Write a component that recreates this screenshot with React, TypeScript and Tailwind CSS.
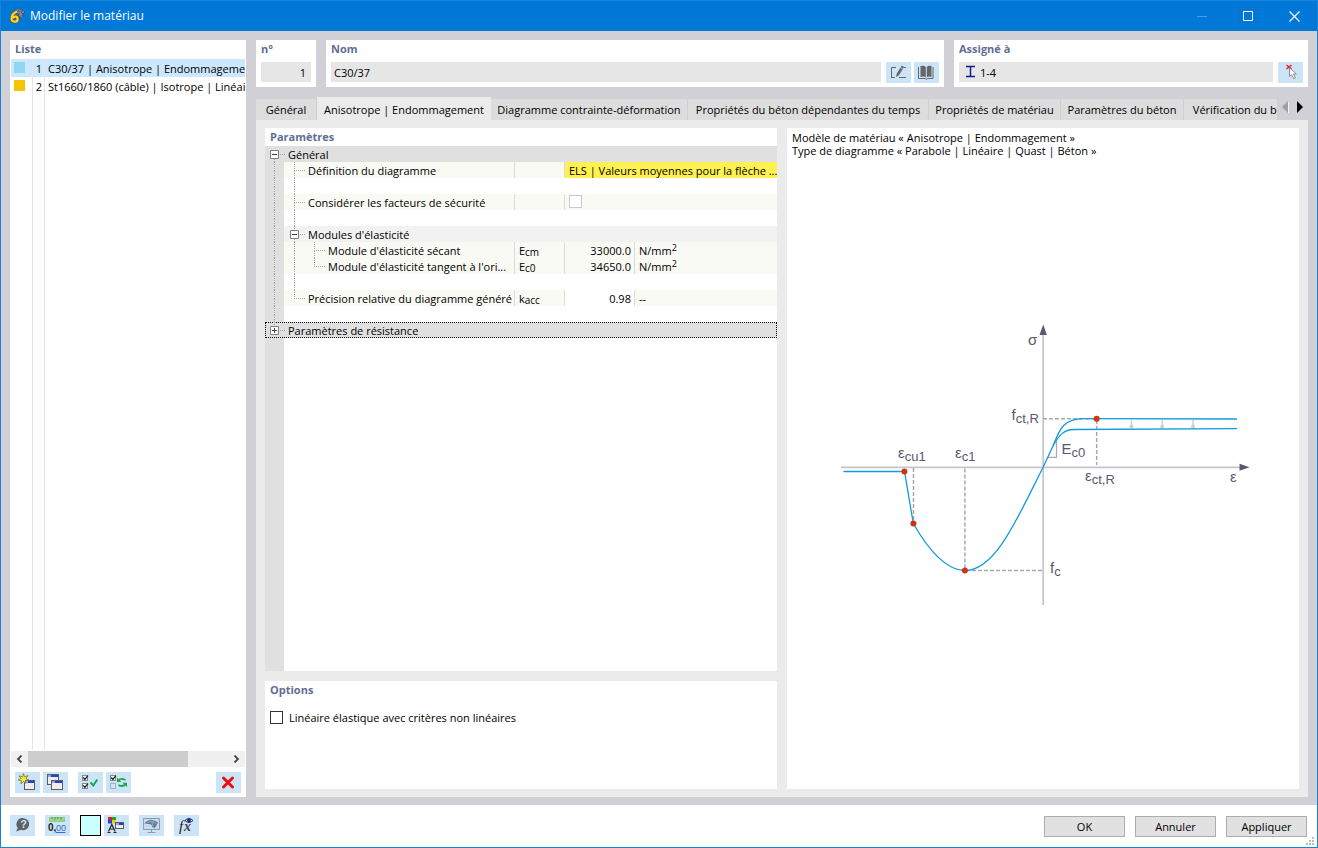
import React, { useState } from "react";

const iconButton =
  "flex h-[21px] w-[25px] shrink-0 items-center justify-center bg-[#cce4f7] hover:bg-[#b5d9f5]";
const heading = "h-[18px] px-[5px] font-bold leading-[18px] text-[#5f6d93]";
const field = "h-5 min-w-0 bg-[#e6e6e6] outline-none";

type IconProps = { children: React.ReactNode };

function Icon({ children }: IconProps) {
  return (
    <svg width="25" height="21" viewBox="0 0 25 21" aria-hidden="true">
      {children}
    </svg>
  );
}

function IconButton({ label, children }: { label: string; children: React.ReactNode }) {
  return (
    <button type="button" aria-label={label} className={iconButton}>
      <Icon>{children}</Icon>
    </button>
  );
}

function MiniWindow({ x, y, w = 11, h = 10 }: { x: number; y: number; w?: number; h?: number }) {
  return (
    <g>
      <rect x={x + 0.5} y={y + 0.5} width={w - 1} height={h - 1} fill="#eeedeb" stroke="#5c5c5c" />
      <rect x={x + 1} y={y + 1} width={w - 2} height="2" fill="#1f3fe0" />
      <rect x={x + 1} y={y + 1} width="3" height="2" fill="#8fa6ee" />
    </g>
  );
}

function TickedBox({ x, y }: { x: number; y: number }) {
  return (
    <g fill="none">
      <rect x={x + 0.5} y={y + 0.5} width="5" height="5" fill="#f5f5f5" stroke="#8a8a8a" />
      <path d={`M${x + 1.2} ${y + 2.4}l1.6 2L${x + 6} ${y + 0.6}`} stroke="#222" strokeWidth="1.3" />
    </g>
  );
}

function AppLogo() {
  return (
    <svg width="16" height="16" viewBox="0 0 16 16" aria-hidden="true">
      <path d="M5 2.500Q10-1.500 16 4L13 10 10 11 8 4Z" fill="#42546a" />
      <path d="M6 2.500Q10.500.500 15 5M8 4.500Q11 4 13.500 7M10.500 1L13 10M8 1.500L12 9M15 3L10 8" stroke="#8f9fae" strokeWidth=".7" fill="none" />
      <path
        d="M8 3.600C4.500 5 2.600 7.500 2.600 10.700 2.600 14.800 8.600 14.500 8.600 10.900 8.600 8 5 8 3.600 10"
        fill="none"
        stroke="#6e5a16"
        strokeWidth="3.400"
      />
      <path
        d="M8 3.600C4.500 5 2.600 7.500 2.600 10.700 2.600 14.800 8.600 14.500 8.600 10.900 8.600 8 5 8 3.600 10"
        fill="none"
        stroke="#ffd22e"
        strokeWidth="2.200"
      />
    </svg>
  );
}

function TitleBar() {
  return (
    <header className="flex h-[30px] shrink-0 items-center bg-[#0078d7] pl-2 text-white">
      <AppLogo />
      <h1 className="flex-1 pl-[5px] text-[12px] font-normal">Modifier le matériau</h1>
      <button type="button" aria-label="Réduire" disabled className="flex h-full w-[46px] items-center justify-center">
        <svg width="11" height="11" viewBox="0 0 11 11"><path d="M0 5.500h10" stroke="#4a9fe6" /></svg>
      </button>
      <button type="button" aria-label="Agrandir" className="flex h-full w-[46px] items-center justify-center">
        <svg width="11" height="11" viewBox="0 0 11 11"><path d="M.5.500h9v9h-9z" fill="none" stroke="#fff" /></svg>
      </button>
      <button type="button" aria-label="Fermer" className="flex h-full w-[46px] items-center justify-center">
        <svg width="11" height="11" viewBox="0 0 11 11"><path d="M.5.500l10 10M10.500.500l-10 10" stroke="#fff" strokeWidth="1.200" /></svg>
      </button>
    </header>
  );
}

const materials = [
  { id: 1, name: "C30/37 | Anisotrope | Endommagement", color: "bg-[#8ed8f5]" },
  { id: 2, name: "St1660/1860 (câble) | Isotrope | Linéaire", color: "bg-[#f5c400]" },
];

function MaterialList() {
  const [selected, setSelected] = useState(1);
  return (
    <aside className="flex w-[236px] shrink-0 flex-col bg-white px-px pb-1">
      <h2 className="h-[19px] px-1 font-bold leading-[18px] text-[#5f6d93]">Liste</h2>
      <ul>
        {materials.map((m) => (
          <li key={m.id}>
            <button
              type="button"
              onClick={() => setSelected(m.id)}
              className={
                "grid h-[18px] w-full grid-cols-[21px_12px_minmax(0,1fr)] text-left leading-[20px] " +
                (selected === m.id ? "bg-[#cce8ff]" : "bg-white")
              }
            >
              <span className="pl-[3px] pt-[3px]">
                <span className={"block h-[11px] w-[11px] " + m.color} />
              </span>
              <span className="h-[18px] border-l border-[#e5e5e5] pr-[2px] text-right">{m.id}</span>
              <span className="h-[18px] overflow-hidden whitespace-nowrap border-l border-[#e5e5e5] pl-[3px]">{m.name}</span>
            </button>
          </li>
        ))}
      </ul>
      <div className="grid flex-1 grid-cols-[21px_12px_minmax(0,1fr)]">
        <span />
        <span className="border-l border-[#e5e5e5]" />
        <span className="border-l border-[#e5e5e5]" />
      </div>
      <div className="mt-px flex h-4 bg-[#f0f0f0]">
        <button type="button" aria-label="Défiler à gauche" className="flex w-[17px] items-center justify-center">
          <svg width="7" height="8" viewBox="0 0 7 8"><path d="M5.500.500L2 4l3.500 3.500" fill="none" stroke="#444" strokeWidth="1.800" /></svg>
        </button>
        <div className="flex-1"><div className="h-4 w-4/5 bg-[#cdcdcd]" /></div>
        <button type="button" aria-label="Défiler à droite" className="flex w-[17px] items-center justify-center">
          <svg width="7" height="8" viewBox="0 0 7 8"><path d="M1.500.500L5 4 1.500 7.500" fill="none" stroke="#444" strokeWidth="1.800" /></svg>
        </button>
      </div>
      <div className="mt-[5px] flex gap-[3px] px-1">
        <IconButton label="Nouveau matériau">
          <MiniWindow x={9} y={8} />
          <path d="M8.500 1.500l1 3.500 3.500-1.500-2 3 3 1.500-3.700.500.500 3-2.300-2.200L6 12l.5-3.200L3.200 8l2.800-1.500L4.200 3.800l3.300 1z" fill="#f4ea3a" stroke="#6d6a2a" strokeWidth=".7" />
        </IconButton>
        <IconButton label="Copier le matériau">
          <MiniWindow x={4} y={2} w={12} h={11} />
          <MiniWindow x={8} y={8} w={12} />
        </IconButton>
        <span className="w-1" />
        <IconButton label="Tout sélectionner">
          <TickedBox x={4} y={3} />
          <TickedBox x={4} y={11} />
          <path d="M12.500 10.500l2.800 3 4-6" fill="none" stroke="#18a84b" strokeWidth="2" />
        </IconButton>
        <IconButton label="Inverser la sélection">
          <TickedBox x={4} y={3} />
          <rect x="4.500" y="11.500" width="5" height="5" fill="none" stroke="#a9b3bb" />
          <path d="M12 8.500Q15.500 5.500 19.500 8M20 12Q16.500 15.500 12.500 13" fill="none" stroke="#18a84b" strokeWidth="1.800" />
          <path d="M11 5.500v4.500h4.500zM21 15V10.800h-4.500z" fill="#18a84b" />
        </IconButton>
        <span className="flex-1" />
        <IconButton label="Supprimer">
          <path d="M7.500 6l9 9M16.500 6l-9 9" stroke="#f00c0c" strokeWidth="3" strokeLinecap="round" />
        </IconButton>
      </div>
    </aside>
  );
}

function HeaderFields() {
  return (
    <div className="flex gap-[10px]">
      <section className="h-[47px] w-[60px] bg-white">
        <label htmlFor="num" className={"block " + heading}>n°</label>
        <div className="px-[5px] pt-1">
          <input id="num" readOnly value="1" className={field + " block w-full pr-[5px] text-right"} />
        </div>
      </section>
      <section className="h-[47px] min-w-0 flex-1 bg-white">
        <label htmlFor="name" className={"block " + heading}>Nom</label>
        <div className="flex gap-[3px] px-[5px] pt-1">
          <input id="name" readOnly value="C30/37" className={field + " mr-[2px] flex-1 pl-[3px]"} />
          <IconButton label="Modifier le nom">
            <path d="M10 5.500H5.500v10M5 15.500h4M13 15.500h7M17.500 5.500h2.500" fill="none" stroke="#666" />
            <path d="M10 15l.7-3.200 5-8.300 2.300 1.400-5 8.300z" fill="#666" />
            <path d="M14.300 5.500l2.400 1.500" stroke="#cce4f7" strokeWidth=".8" />
          </IconButton>
          <IconButton label="Bibliothèque de matériaux">
            <path d="M6.500 4Q10 3 11.800 5v10.500Q10 14 6.500 15zM17.500 4Q14.500 3 12.800 5v10.500Q14.500 14 17.500 15z" fill="#666" />
            <path d="M4.500 5v11.500h6.500l1.400.7 1.400-.7h5.200V5" fill="none" stroke="#666" />
          </IconButton>
        </div>
      </section>
      <section className="h-[47px] w-[354px] bg-white">
        <label htmlFor="assigned" className={"block " + heading}>Assigné à</label>
        <div className="flex gap-[5px] px-[5px] pt-1">
          <div className="flex h-5 min-w-0 flex-1 bg-[#e6e6e6] pl-[6px]">
            <svg width="12" height="20" viewBox="0 0 12 20" aria-hidden="true">
              <path d="M1 4.500h9M1 14.500h9M5.500 4.500v10" stroke="#171798" strokeWidth="1.500" fill="none" />
            </svg>
            <input id="assigned" readOnly value="1-4" className={field + " flex-1 pl-[3px]"} />
          </div>
          <IconButton label="Sélectionner les objets">
            <path d="M8.500 3l5 4M13.500 3l-5 4" stroke="#ef1b24" strokeWidth="1.500" />
            <path d="M11.500 5.500v9l2.200-1.800 2 4 1.700-.9-2-3.800h2.900z" fill="#fff" stroke="#777" strokeWidth=".8" />
          </IconButton>
        </div>
      </section>
    </div>
  );
}

const tabs = [
  { label: "Général", width: "w-[61px]" },
  { label: "Anisotrope | Endommagement", width: "w-[174px]" },
  { label: "Diagramme contrainte-déformation", width: "w-[197px]" },
  { label: "Propriétés du béton dépendantes du temps", width: "w-[241px]" },
  { label: "Propriétés de matériau", width: "w-[132px]" },
  { label: "Paramètres du béton", width: "w-[123px]" },
  { label: "Vérification du béton", width: "w-[126px]" },
];

function TabBar() {
  const [active, setActive] = useState(1);
  return (
    <nav className="mt-[10px] flex h-[23px] shrink-0">
      <div role="tablist" className="flex min-w-0 flex-1 items-end overflow-hidden">
        {tabs.map((t, i) => (
          <button
            key={t.label}
            role="tab"
            type="button"
            aria-selected={i === active}
            onClick={() => setActive(i)}
            className={
              "shrink-0 whitespace-nowrap text-center " +
              t.width +
              (i === active ? " h-[23px] bg-[#ebebeb] pt-[3px]" : " h-[21px] border-r border-[#d0d0d0] bg-[#dddddd] pt-px")
            }
          >
            {t.label}
          </button>
        ))}
      </div>
      <div className="flex w-[31px] gap-[7px] pl-1 pt-1">
        <button type="button" aria-label="Onglets précédents" className="h-3 w-2">
          <svg width="8" height="12" viewBox="0 0 8 12"><path d="M7.500 1v11" stroke="#f5f5f5" /><path d="M7 0v12L1 6z" fill="#a0a0a0" /></svg>
        </button>
        <button type="button" aria-label="Onglets suivants" className="h-3 w-2">
          <svg width="8" height="12" viewBox="0 0 8 12"><path d="M1 0v12l6-6z" fill="#000" /></svg>
        </button>
      </div>
    </nav>
  );
}

/* One column of the tree: a dotted rail, optionally with a branch to the right. */
function Rail({
  gutter,
  clear,
  up,
  down,
  branch,
}: {
  gutter?: boolean;
  clear?: boolean;
  up?: boolean;
  down?: boolean;
  branch?: boolean;
}) {
  return (
    <span
      className={
        "flex h-4 shrink-0 " + (gutter ? "w-[19px] pl-[9px] " : "w-5 pl-[10px] ") + (gutter && !clear ? "bg-[#e0e0e0]" : "")
      }
    >
      <span className="flex-1">
        <span
          className={
            "block h-[9px] border-dotted border-[#a5a5a5] " +
            (up ? "border-l " : "") +
            (branch ? "-mr-px border-b" : "")
          }
        />
        <span className={"block h-[7px] border-dotted border-[#a5a5a5] " + (down ? "border-l" : "")} />
      </span>
    </span>
  );
}

function Expander({ gutter, open, up, down }: { gutter?: boolean; open: boolean; up?: boolean; down?: boolean }) {
  return (
    <span className="relative flex shrink-0">
      <Rail gutter={gutter} clear up={up} down={down} branch />
      <button
        type="button"
        aria-label={open ? "Réduire" : "Développer"}
        className={"absolute top-1 h-[9px] w-[9px] bg-white " + (gutter ? "left-[5px]" : "left-[6px]")}
      >
        <svg className="block" width="9" height="9" viewBox="0 0 9 9">
          <path d="M.5.500h8v8h-8z" fill="#fff" stroke="#808080" />
          <path d={open ? "M2 4.500h5" : "M2 4.500h5M4.500 2v5"} stroke="#444" />
        </svg>
      </button>
    </span>
  );
}

type ParamRow = {
  rails: React.ReactNode;
  label: string;
  symbol?: [string, string];
  value?: string;
  unit?: React.ReactNode;
  kind?: "choice" | "check";
};

const gutterRail = <Rail gutter up down />;

const mm2 = (
  <>
    N/mm<sup className="text-[9px]">2</sup>
  </>
);

function DataRow({ rails, label, symbol, value, unit, kind }: ParamRow) {
  const cell = "border-l border-[#dcdcdc] p-0";
  return (
    <tr className="h-4 bg-[#f9faf4]">
      <th scope="row" className="p-0 text-left font-normal">
        <span className="flex h-4">
          {rails}
          <span className="min-w-0 flex-1 overflow-hidden whitespace-nowrap pl-1 leading-[18px]">{label}</span>
        </span>
      </th>
      <td className={cell}>
        <span className="block h-4 pl-1 leading-[18px]">
          {symbol && (
            <>
              {symbol[0]}
              <sub className="bottom-[-1px] text-[10px]">{symbol[1]}</sub>
            </>
          )}
        </span>
      </td>
      {kind === "choice" && (
        <td colSpan={2} className="border-l border-[#dcdcdc] bg-[#fff152] p-0">
          <span className="block h-4 overflow-hidden whitespace-nowrap pl-1 leading-[18px]">{value}</span>
        </td>
      )}
      {kind === "check" && (
        <td colSpan={2} className={cell}>
          <span className="flex h-4 pl-1 pt-px">
            <input
              type="checkbox"
              aria-label={label}
              className="h-[13px] w-[13px] appearance-none border border-[#c8c8c8] bg-white checked:bg-[#0078d7]"
            />
          </span>
        </td>
      )}
      {!kind && (
        <>
          <td className={cell + (symbol?.[0] === "k" ? " bg-white" : "")}>
            <span className="block h-4 pr-[3px] text-right leading-[18px]">{value}</span>
          </td>
          <td className={cell}>
            <span className="block h-4 pl-1 leading-[18px]">{unit}</span>
          </td>
        </>
      )}
    </tr>
  );
}

function GroupRow({ rails, label, className }: { rails: React.ReactNode; label: string; className: string }) {
  return (
    <tr className={"h-4 " + className}>
      <th scope="rowgroup" colSpan={4} className="p-0 text-left font-normal">
        <span className="flex h-4">
          {rails}
          <span className="pl-1 leading-[18px]">{label}</span>
        </span>
      </th>
    </tr>
  );
}

function BlankRow({ rail }: { rail?: boolean }) {
  return (
    <tr className="h-4 bg-white">
      <td colSpan={4} className="p-0">
        <span className="flex">
          {gutterRail}
          {rail && <Rail up down />}
        </span>
      </td>
    </tr>
  );
}

function Parameters() {
  const branch = <>{gutterRail}<Rail up down branch /></>;
  return (
    <section className="flex min-h-0 flex-1 flex-col bg-white">
      <h2 className={heading}>Paramètres</h2>
      <table className="w-full table-fixed border-separate border-spacing-0">
        <colgroup>
          <col />
          <col className="w-[50px]" />
          <col className="w-[70px]" />
          <col className="w-[143px]" />
        </colgroup>
        <tbody>
          <GroupRow label="Général" className="bg-[#e0e0e0]" rails={<Expander gutter open down />} />
          <DataRow label="Définition du diagramme" rails={branch} kind="choice" value="ELS | Valeurs moyennes pour la flèche ..." />
          <BlankRow rail />
          <DataRow label="Considérer les facteurs de sécurité" rails={branch} kind="check" />
          <BlankRow rail />
          <GroupRow label="Modules d'élasticité" className="bg-[#f2f2f2]" rails={<>{gutterRail}<Expander open up down /></>} />
          <DataRow
            label="Module d'élasticité sécant"
            rails={<>{gutterRail}<Rail up down /><Rail up down branch /></>}
            symbol={["E", "cm"]}
            value="33000.0"
            unit={mm2}
          />
          <DataRow
            label="Module d'élasticité tangent à l'ori..."
            rails={<>{gutterRail}<Rail up down /><Rail up branch /></>}
            symbol={["E", "c0"]}
            value="34650.0"
            unit={mm2}
          />
          <BlankRow rail />
          <DataRow
            label="Précision relative du diagramme généré"
            rails={<>{gutterRail}<Rail up branch /></>}
            symbol={["k", "acc"]}
            value="0.98"
            unit="--"
          />
          <BlankRow />
          <GroupRow
            label="Paramètres de résistance"
            className="bg-[#e0e0e0] outline-1 -outline-offset-1 outline-dotted outline-black"
            rails={<Expander gutter open={false} up />}
          />
        </tbody>
      </table>
      <div className="w-[19px] flex-1 bg-[#e0e0e0]" />
    </section>
  );
}

function Options() {
  return (
    <section className="h-[108px] shrink-0 bg-white">
      <h2 className={heading}>Options</h2>
      <label className="flex items-start gap-[6px] px-[5px] pt-[10px]">
        <input type="checkbox" className="mt-[2px] h-[13px] w-[13px] appearance-none border border-[#333] bg-white checked:bg-[#0078d7]" />
        Linéaire élastique avec critères non linéaires
      </label>
    </section>
  );
}

function StressStrainChart() {
  const label = "fill-[#5b586e] [font-family:'Liberation_Sans',sans-serif]";
  return (
    <svg width="414" height="286" viewBox="836 322 414 286" role="img" aria-label="Diagramme contrainte-déformation">
      <g stroke="#c6c5cd" strokeWidth="1.800">
        <path d="M841 467.300h399M1043.200 335v270" />
      </g>
      <path d="M1249.500 467.300l-10-3.500v7zM1043.200 324.500l-3.700 10.500h7.400z" fill="#5b586e" />
      <g stroke="#a9a7b1" strokeWidth="1.500" strokeDasharray="4 2" fill="none">
        <path d="M1043 418.700h53M1096.700 420v45M913.500 468v54M964.900 468.500v101M966 570.600h77" />
      </g>
      <g stroke="#d0d0d4" strokeWidth="1.500" fill="none">
        <path d="M1131.500 420v5M1162.200 420v5M1193 420v5" />
      </g>
      <g fill="#cfcfd3">
        <circle cx="1131.500" cy="426.500" r="2" />
        <circle cx="1162.200" cy="426.500" r="2" />
        <circle cx="1193" cy="426.500" r="2" />
      </g>
      <path d="M1048 457.300h8.500v-18" fill="none" stroke="#a9a7b1" strokeWidth="1.200" />
      <g stroke="#129bdf" strokeWidth="1.300" fill="none">
        <path d="M843.500 471.500h61L913.300 523.500C932 556 950 570.500 965 570.500c31 0 53-54 78-103L1053 446C1060 428 1064 418.600 1084 418.600L1237 419" />
        <path d="M1053 446C1059 435 1064 429.500 1074 429.500L1237 428.600" />
      </g>
      <g fill="#cf3510">
        <circle cx="904.400" cy="471.500" r="3" />
        <circle cx="913.400" cy="523.500" r="3" />
        <circle cx="964.900" cy="570.500" r="3" />
        <circle cx="1096.600" cy="418.700" r="3" />
      </g>
      <g className={label} fontSize="15">
        <text x="1028" y="345">σ</text>
        <text x="1230" y="482">ε</text>
        <text x="1011.500" y="420">f<tspan fontSize="13" dy="3">ct,R</tspan></text>
        <text x="898" y="458">ε<tspan fontSize="13" dy="3">cu1</tspan></text>
        <text x="955" y="458">ε<tspan fontSize="13" dy="3">c1</tspan></text>
        <text x="1061.500" y="454">E<tspan fontSize="13" dy="3">c0</tspan></text>
        <text x="1085" y="481">ε<tspan fontSize="13" dy="3">ct,R</tspan></text>
        <text x="1050" y="573">f<tspan fontSize="13" dy="3">c</tspan></text>
      </g>
    </svg>
  );
}

function Footer() {
  const action = "h-[21px] w-[81px] border border-[#adadad] bg-[#e1e1e1] pt-px hover:border-[#0078d7] hover:bg-[#e5f1fb]";
  return (
    <footer className="relative flex h-[42px] shrink-0 items-start gap-[10px] bg-white pl-[9px] pr-[10px] pt-[10px]">
      <IconButton label="Aide">
        <path d="M13.500 3.200a6 6 0 1 1-2.500 11.600L6 16.500l1.800-3.500A6.100 6.100 0 0 1 13.500 3.200z" fill="#5e6063" />
        <text x="10.300" y="13" fontSize="11" fontWeight="bold" className="fill-[#cce4f7] [font-family:'Liberation_Sans',sans-serif]">?</text>
      </IconButton>
      <IconButton label="Unités et décimales">
        <path d="M4.500 2.500h15v4h-15z" fill="#9ad48c" stroke="#8fcb80" />
        <path d="M7 2v2M10 2v2.500M13 2v2M16 2v2.500" stroke="#3f8b35" strokeWidth=".8" />
        <g fontSize="10" className="[font-family:'Liberation_Sans',sans-serif]">
          <text x="3" y="16" fill="#222" fontWeight="bold">0,</text>
          <text x="11" y="16" fill="#2f6fd0" fontSize="9">00</text>
        </g>
        <path d="M11 17.500h9.500" stroke="#2f6fd0" />
      </IconButton>
      <div className="flex gap-[3px]">
        <button type="button" aria-label="Couleur" className="h-[21px] w-[21px] border border-black bg-[#ccffff]" />
        <IconButton label="Modifier la couleur et l'apparence">
          <path d="M4 2h4v3H4z" fill="#e02020" /><path d="M8 2h4v3H8z" fill="#28a428" />
          <path d="M4 5h4v3.500H4z" fill="#2343e8" /><path d="M8 5h4v3.500H8z" fill="#f6cf00" />
          <path d="M4.500 16.500l3.300-7 3.300 7M6 14h4M3.500 17.500h3M9.500 17.500h3" fill="none" stroke="#222" strokeWidth="1.200" />
          <MiniWindow x={11} y={7} w={9} h={7} />
        </IconButton>
      </div>
      <IconButton label="Affichage">
        <path d="M4.500 3.500h16v11h-16zM12.500 14.500v2.500M8.500 17.500h8" fill="#c6dceb" stroke="#909ba5" />
        <path d="M5.500 8.500Q11 1.500 19 7.500L16 13 13 12Q13 8.500 9.500 9z" fill="#5f7f9b" />
        <path d="M8 7.500Q13 5 17.500 9M11 5.500Q14 8 14 11.500M14.500 5.500L13.500 10" stroke="#a6bed0" strokeWidth=".6" fill="none" />
      </IconButton>
      <IconButton label="Formules">
        <text x="5" y="16" fontSize="15" fontStyle="italic" className="fill-[#222] [font-family:'Liberation_Serif',serif]">f</text>
        <text x="10" y="16" fontSize="14" fontStyle="italic" fontWeight="bold" className="fill-[#444] [font-family:'Liberation_Serif',serif]">x</text>
        <path d="M11 5.500Q15 1.500 19 5.500 15 9.500 11 5.500z" fill="#e9eefb" stroke="#252a72" />
        <circle cx="15" cy="5.300" r="1.900" fill="#252a72" />
      </IconButton>
      <span className="flex-1" />
      <div className="flex gap-[10px] pt-px">
        <button type="button" className={action}>OK</button>
        <button type="button" className={action}>Annuler</button>
        <button type="button" className={action}>Appliquer</button>
      </div>
      <svg className="absolute bottom-[2px] right-[3px]" width="8" height="8" viewBox="0 0 8 8" aria-hidden="true">
        <path d="M6 0h2v2H6zM3 3h2v2H3zM6 3h2v2H6zM0 6h2v2H0zM3 6h2v2H3zM6 6h2v2H6z" fill="#bdbdbd" />
      </svg>
    </footer>
  );
}

export default function App() {
  return (
    <div className="flex min-h-screen flex-col border border-[#1883d7] bg-[#d1d0d6] text-[11px] leading-[18px] text-black [font-family:'Open_Sans','Noto_Sans',sans-serif]">
      <TitleBar />
      <main className="flex flex-1 gap-[10px] px-[9px] pb-2 pt-[9px]">
        <MaterialList />
        <div className="flex min-w-0 flex-1 flex-col">
          <HeaderFields />
          <TabBar />
          <div className="grid flex-1 grid-cols-2 gap-[10px] bg-[#ebebeb] px-[9px] py-2">
            <div className="flex min-w-0 flex-col gap-[10px]">
              <Parameters />
              <Options />
            </div>
            <section className="flex min-w-0 flex-col bg-white">
              <p className="px-[5px] pt-[3px] leading-[13px]">
                Modèle de matériau « Anisotrope | Endommagement »
                <br />
                Type de diagramme « Parabole | Linéaire | Quast | Béton »
              </p>
              <div className="flex flex-1 items-center justify-center pb-[17px]">
                <StressStrainChart />
              </div>
            </section>
          </div>
        </div>
      </main>
      <Footer />
    </div>
  );
}
